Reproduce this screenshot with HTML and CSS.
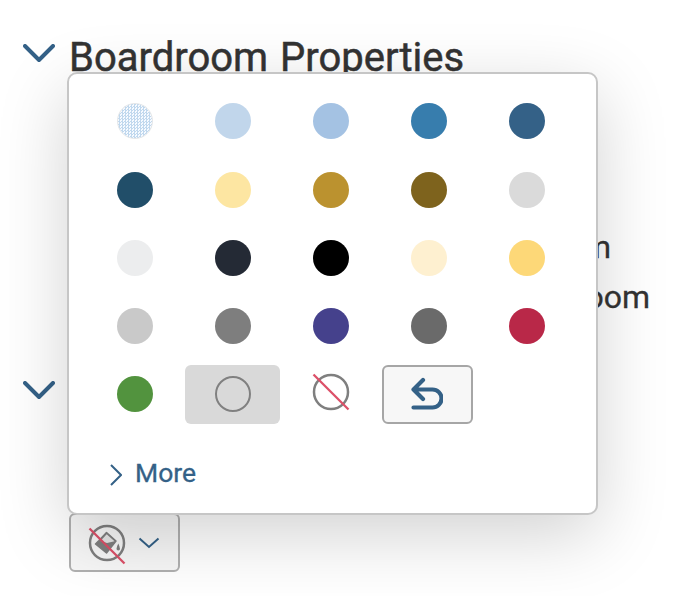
FILE: index.html
```
<!DOCTYPE html>
<html lang="en">
<head>
    <meta charset="utf-8">
    <title>Boardroom Properties</title>
    <link rel="stylesheet" href="styles.css">
</head>
<body>
<div class="panel">
    <div class="section-head">
        <svg class="chevron" viewBox="0 0 32 19"><path d="M2 2L16 16L30 2"/></svg>
        <h1 class="title">Boardroom Properties</h1>
    </div>
    <div class="values">
        <div class="value first">m</div>
        <div class="value">oom</div>
    </div>
    <div class="section-head second">
        <svg class="chevron" viewBox="0 0 32 19"><path d="M2 2L16 16L30 2"/></svg>
    </div>
    <button class="fill-button">
        <svg class="fill-icon" width="38" height="42" viewBox="0 0 38 42">
            <circle cx="19" cy="20" r="17" fill="none" stroke="#7f7f7f" stroke-width="2.5"/>
            <path d="M11 17.500L18.500 9.500L28 18L18.500 30L7.500 21Z" fill="#7f7f7f" stroke="#7f7f7f" stroke-width="1.500" stroke-linejoin="round"/>
            <path d="M18.700 11.200L26.500 18.200L19 20L12.500 18Z" fill="#e5e5e5"/>
            <path d="M30.300 20.500q-3.400 6.500 0 7q3.200-.5 0-7" fill="#7f7f7f"/>
            <path d="M1.500 5.500L36.500 40.500" stroke="#dc5068" stroke-width="2.300"/>
        </svg>
        <svg class="fill-arrow" width="22" height="12" viewBox="0 0 22 12"><path d="M1.500 1.500L11 10L20.500 1.500"/></svg>
    </button>
</div>

<!-- colour picker popover -->
<div class="popover">
    <div class="swatches">
        <div class="cell"><span class="swatch pattern"></span></div>
        <div class="cell"><span class="swatch c2"></span></div>
        <div class="cell"><span class="swatch c3"></span></div>
        <div class="cell"><span class="swatch c4"></span></div>
        <div class="cell"><span class="swatch c5"></span></div>
        <div class="cell"><span class="swatch c6"></span></div>
        <div class="cell"><span class="swatch c7"></span></div>
        <div class="cell"><span class="swatch c8"></span></div>
        <div class="cell"><span class="swatch c9"></span></div>
        <div class="cell"><span class="swatch c10"></span></div>
        <div class="cell"><span class="swatch c11"></span></div>
        <div class="cell"><span class="swatch c12"></span></div>
        <div class="cell"><span class="swatch c13"></span></div>
        <div class="cell"><span class="swatch c14"></span></div>
        <div class="cell"><span class="swatch c15"></span></div>
        <div class="cell"><span class="swatch c16"></span></div>
        <div class="cell"><span class="swatch c17"></span></div>
        <div class="cell"><span class="swatch c18"></span></div>
        <div class="cell"><span class="swatch c19"></span></div>
        <div class="cell"><span class="swatch c20"></span></div>
        <div class="cell"><span class="swatch c21"></span></div>
        <div class="cell"><span class="selected"><span class="swatch outline"></span></span></div>
        <div class="cell">
            <svg class="no-color" width="38" height="38" viewBox="0 0 38 38">
                <circle cx="19" cy="19" r="17" fill="none" stroke="#7f7f7f" stroke-width="2.500"/>
                <path d="M1.500 1.500L36.500 36.500" stroke="#dc5068" stroke-width="2.300"/>
            </svg>
        </div>
        <div class="cell">
            <button class="undo">
                <svg width="32" height="34" viewBox="0 0 32 34"><path d="M12 3L2.500 12.500L12 22M3 12.500H21.500A9 9 0 0 1 21.500 30.500H2.500"/></svg>
            </button>
        </div>
    </div>
    <div class="more">
        <svg width="12" height="22" viewBox="0 0 12 22"><path d="M1 1L11 11L1 21"/></svg>
        <span>More</span>
    </div>
</div>
</body>
</html>
```
FILE: styles.css
```
body {
    margin: 0;
    height: 596px;
    overflow: hidden;
    background: #fff;
    color: #333;
    font-family: Roboto, sans-serif;
}
.panel {
    padding: 32px 0 0 23px;
}
.section-head {
    display: flex;
    height: 50px;
}
.chevron {
    width: 32px;
    height: 19px;
    margin-top: 12px;
    fill: none;
    stroke: #346187;
    stroke-width: 4;
    stroke-linecap: round;
    stroke-linejoin: round;
}
.second .chevron {
    margin-top: 13px;
}
.title {
    margin: 1px 0 0 14px;
    font-size: 40px;
    font-weight: 400;
    line-height: 50px;
    word-spacing: 2px;
    white-space: nowrap;
    -webkit-text-stroke: 0.5px #333;
}
.values {
    width: 627px;
    height: 286px;
    padding-top: 140px;
    box-sizing: border-box;
    text-align: right;
    font-size: 32px;
    line-height: 50px;
    -webkit-text-stroke: 0.3px #333;
}
.first {
    padding-right: 39px;
}
.fill-button {
    display: flex;
    align-items: center;
    gap: 12px;
    width: 111px;
    height: 59px;
    margin: 95px 0 0 46px;
    padding: 0 0 0 17px;
    background: #f7f7f7;
    border: 2px solid #b0b0b0;
    border-radius: 6px;
}
.fill-icon {
    margin-top: 2px;
}
.fill-arrow {
    fill: none;
    stroke: #346187;
    stroke-width: 2;
}

.popover {
    position: absolute;
    left: 67px;
    top: 72px;
    width: 531px;
    height: 443px;
    box-sizing: border-box;
    padding: 13.3px 0 0 17px;
    background: #fff;
    border: 2px solid #c6c6c6;
    border-radius: 10px;
    box-shadow: 0 20px 70px rgba(0, 0, 0, 0.18);
}
.swatches {
    display: grid;
    grid-template-columns: repeat(5, 98px);
    grid-auto-rows: 68.2px;
}
.cell {
    display: flex;
    align-items: center;
    justify-content: center;
}
.swatch {
    width: 36px;
    height: 36px;
    border-radius: 50%;
}
.pattern {
    box-sizing: border-box;
    border: 1px solid #e4e6e8;
    background: repeating-conic-gradient(#c0d8ee 0 25%, #f6faff 0 50%) 0 0 / 3px 3px;
}
.c2 { background: #c1d6eb; }
.c3 { background: #a4c2e3; }
.c4 { background: #377dad; }
.c5 { background: #346187; }
.c6 { background: #214e69; }
.c7 { background: #fde6a2; }
.c8 { background: #bb922f; }
.c9 { background: #7e631d; }
.c10 { background: #dadada; }
.c11 { background: #ecedee; }
.c12 { background: #242a35; }
.c13 { background: #000; }
.c14 { background: #fef0d0; }
.c15 { background: #fdd878; }
.c16 { background: #c9c9c9; }
.c17 { background: #7e7e7e; }
.c18 { background: #45418c; }
.c19 { background: #6a6a6a; }
.c20 { background: #b92848; }
.c21 { background: #52933e; }
.selected {
    display: flex;
    flex: none;
    align-items: center;
    justify-content: center;
    width: 95px;
    height: 59px;
    margin-right: 2px;
    padding-left: 1px;
    box-sizing: border-box;
    background: #d9d9d9;
    border-radius: 6px;
}
.outline {
    box-sizing: border-box;
    border: 2px solid #808080;
}
.no-color {
    margin-bottom: 4px;
}
.undo {
    display: flex;
    align-items: center;
    justify-content: center;
    width: 91px;
    height: 59px;
    margin-right: 3px;
    padding: 0 2px 0 0;
    background: #f7f7f7;
    border: 2px solid #a6a6a6;
    border-radius: 6px;
}
.undo svg {
    fill: none;
    stroke: #346187;
    stroke-width: 4.2;
    stroke-linecap: round;
    stroke-linejoin: round;
}
.more {
    display: flex;
    align-items: center;
    gap: 13px;
    margin: 25px 0 0 24px;
    color: #346187;
    font-size: 26.5px;
    line-height: 40px;
    -webkit-text-stroke: 0.3px #346187;
}
.more svg {
    margin-top: 4px;
    fill: none;
    stroke: #346187;
    stroke-width: 2;
}
```
